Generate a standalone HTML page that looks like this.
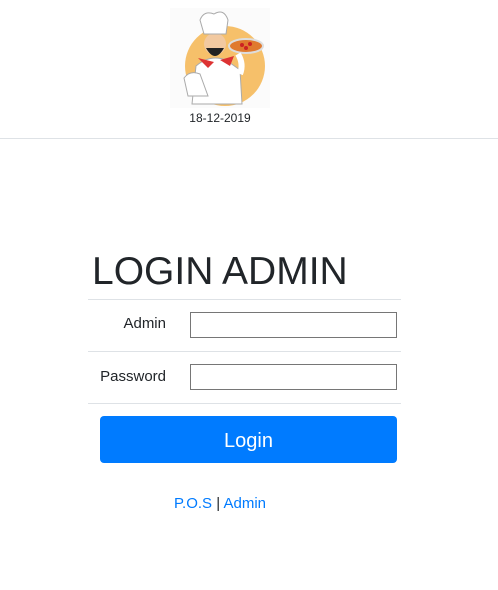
<!DOCTYPE html>
<html><head><style>
body{margin:0;width:498px;height:590px;background:#fff;font-family:"Liberation Sans",sans-serif;position:relative;overflow:hidden;color:#212529}
.a{position:absolute}
.hr{position:absolute;left:88px;width:313px;height:1px;background:#dee2e6}
.lbl{position:absolute;font-size:15px;text-align:right;right:332px}
.inp{position:absolute;left:190px;width:205px;height:24px;border:1px solid #767676;background:#fff}
</style></head><body>
<svg class="a" style="left:170px;top:8px" width="100" height="100" viewBox="0 0 100 100">
<rect width="100" height="100" fill="#fbfbfb"/>
<circle cx="55" cy="58" r="40" fill="#f6c06a"/>
<path d="M22 96 L26 58 Q40 46 56 52 L70 62 L72 96 Z" fill="#fff" stroke="#aaa" stroke-width="1"/>
<path d="M14 70 Q20 62 30 66 L38 88 L18 88 Z" fill="#fff" stroke="#aaa"/>
<circle cx="45" cy="36" r="11" fill="#f2c9a0"/>
<path d="M36 40 Q45 56 54 40 Z" fill="#222"/>
<path d="M30 12 Q34 2 44 6 Q54 0 58 12 L56 26 L34 26 Z" fill="#fff" stroke="#aaa"/>
<path d="M28 50 L44 54 L38 60 Z" fill="#d33"/>
<path d="M50 52 L64 48 L60 58 Z" fill="#d33"/>
<ellipse cx="76" cy="38" rx="17" ry="7" fill="#e07a2e" stroke="#ddd" stroke-width="2"/>
<circle cx="72" cy="37" r="2" fill="#c22"/><circle cx="80" cy="36" r="2" fill="#c22"/><circle cx="76" cy="40" r="2" fill="#c22"/>
<path d="M68 46 Q74 56 70 66" stroke="#fff" stroke-width="6" fill="none"/>
</svg>
<div class="a" style="left:0;width:440px;top:111px;text-align:center;font-size:12px;color:#212529">18-12-2019</div>
<div class="a" style="left:0;width:498px;top:138px;height:1px;background:#dee2e6"></div>
<div class="a" style="left:92px;top:250px;font-size:39px;color:#212529">LOGIN ADMIN</div>
<div class="hr" style="top:299px"></div>
<div class="lbl" style="top:315px">Admin</div>
<div class="inp" style="top:312px"></div>
<div class="hr" style="top:351px"></div>
<div class="lbl" style="top:368px">Password</div>
<div class="inp" style="top:364px"></div>
<div class="hr" style="top:403px"></div>
<div class="a" style="left:100px;top:416px;width:297px;height:47px;border-radius:4px;background:#007bff;color:#fff;font-size:20px;line-height:51px;text-align:center">Login</div>
<div class="a" style="left:0;width:440px;top:495px;text-align:center;font-size:15px"><span style="color:#007bff">P.O.S</span> | <span style="color:#007bff">Admin</span></div>
</body></html>
